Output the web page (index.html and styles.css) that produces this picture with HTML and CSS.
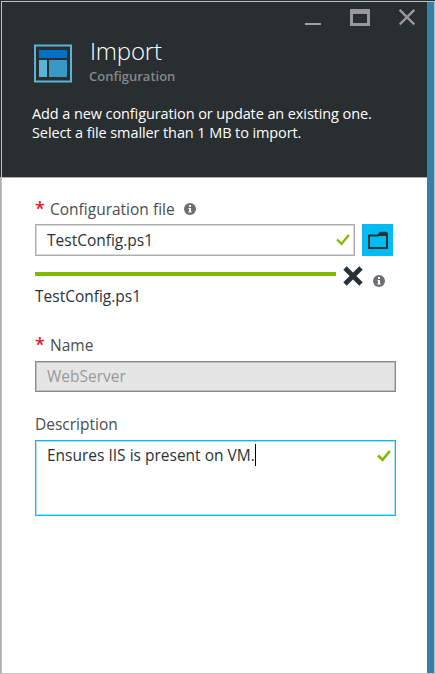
FILE: index.html
```html
<!DOCTYPE html>
<html lang="en">
<head>
<meta charset="utf-8">
<title>Import Configuration</title>
<link rel="stylesheet" href="styles.css">
</head>
<body>
<div class="frame">
  <main class="blade">
    <header class="header">
      <div class="controls">
        <svg width="16" height="18" viewBox="0 0 16 18"><path d="M0 15h16" stroke="#a0a1a2" stroke-width="2"/></svg>
        <svg width="20" height="18" viewBox="0 0 20 18"><path fill="#98999b" fill-rule="evenodd" d="M0 0h20v17H0zM3 5v9h14V5z"/></svg>
        <svg width="16" height="18" viewBox="0 0 16 18"><path d="M.7 .9l14.6 14.6M15.3 .9L.7 15.5" stroke="#98999b" stroke-width="2.4"/></svg>
      </div>
      <div class="heading">
        <svg class="logo" width="38" height="39" viewBox="0 0 38 39"><rect x="1" y="1.5" width="36" height="36" fill="none" stroke="#59b4d9" stroke-width="2"/><path fill="#0072c6" d="M5 6h28v8H5z"/><path fill="#59b4d9" d="M5 16h8v17H5z"/><path fill="#3999c6" d="M15 16h18v17H15z"/></svg>
        <div class="titles">
          <h1>Import</h1>
          <h2>Configuration</h2>
        </div>
      </div>
      <p class="intro">Add a new configuration or update an existing one.<br>Select a file smaller than 1 MB to import.</p>
    </header>
    <form class="form">
      <div class="label"><span class="star">*</span><span>Configuration file</span>
        <svg class="info" width="12" height="12" viewBox="0 0 12 12"><circle cx="6" cy="6" r="6" fill="#6d6e72"/><path fill="#fff" d="M5 2h2v2H5zM4.5 5H7v3.5h.7v1H4.4v-1H5V6h-.5z"/></svg>
      </div>
      <div class="picker">
        <div class="field file"><span>TestConfig.ps1</span>
          <svg class="check" width="14" height="12" viewBox="0 0 14 12"><path d="M1 5.5l4.6 4.4L12.8 1" fill="none" stroke="#7fba00" stroke-width="2.3"/></svg>
        </div>
        <div class="browse"><svg width="22" height="19" viewBox="0 0 22 19"><path d="M2 4.5h9l2.5-2.8H19l1 1V17H2z" fill="none" stroke="#293239" stroke-width="2" stroke-linejoin="round"/><path fill="#293239" d="M10 5l3-4h6l1.500 1.500V5z"/></svg></div>
      </div>
      <div class="progress">
        <div class="bar"></div>
        <svg class="cancel" width="20" height="20" viewBox="0 0 20 20"><path d="M2 2l16 16M18 2L2 18" stroke="#293239" stroke-width="4.8"/></svg>
        <svg class="info2" width="12" height="12" viewBox="0 0 12 12"><circle cx="6" cy="6" r="6" fill="#6d6e72"/><path fill="#fff" d="M5 2h2v2H5zM4.500 5H7v3.500h.7v1H4.400v-1H5V6h-.5z"/></svg>
      </div>
      <div class="uploaded">TestConfig.ps1</div>
      <div class="label name-label"><span class="star">*</span><span>Name</span></div>
      <div class="field disabled"><span>WebServer</span></div>
      <div class="label desc-label"><span>Description</span></div>
      <div class="field area"><span>Ensures IIS is present on VM.</span><i class="caret"></i>
        <svg class="check" width="14" height="12" viewBox="0 0 14 12"><path d="M1 5.5l4.6 4.4L12.8 1" fill="none" stroke="#7fba00" stroke-width="2.6"/></svg>
      </div>
    </form>
  </main>
  <div class="edge"></div>
</div>
</body>
</html>
```
FILE: styles.css
```css
* { box-sizing: border-box; }
body { margin: 0; font: 15.5px/19px "Open Sans", "Noto Sans", sans-serif; color: #293239; background: #292e31; }
svg { display: block; flex: none; }
.frame { display: flex; height: 674px; padding-left: 1px; border-top: 1px solid #292e31; border-bottom: 1px solid #c3c4c5; background: linear-gradient(#292e31 176px, #adadad 176px); }
.blade { flex: 1; border-left: 1px solid #bfc0c2; border-top: 1px solid #bfc3c6; background: #fff; }
.edge { width: 8px; background: #3580a9; border-right: 1px solid #b8bcc0; border-top: 1px solid #bfc3c6; }
.header { height: 176px; padding-top: 7px; background: #292e31; border-bottom: 1px solid #a9acae; color: #fff; }
.controls { display: flex; justify-content: flex-end; gap: 29px; padding-right: 12px; height: 18px; }
.heading { display: flex; padding: 17px 0 0 32px; }
.logo { margin-right: 17px; }
.titles { margin-top: -9px; height: 48px; }
h1, h2 { margin: 0; }
h1 { padding-left: 1px; font-size: 24px; line-height: 32px; font-weight: 300; letter-spacing: -0.2px; }
h2 { padding-top: 1px; font-size: 13px; line-height: 16px; font-weight: 600; color: #85888a; }
.intro { margin: 21px 0 0 30px; font-size: 14.5px; letter-spacing: -0.1px; white-space: nowrap; }
.form { padding: 21px 0 0 33px; }
.label { display: flex; align-items: center; height: 20px; color: #4b4c4f; }
.star { width: 15px; height: 20px; font-size: 18px; line-height: 19px; font-weight: 600; color: #e81123; }
.info { margin-left: 9px; }
.picker { display: flex; gap: 7px; margin-top: 5px; }
.field { display: flex; width: 361px; height: 31px; align-items: center; justify-content: space-between; padding: 0 4px 0 11px; border: 1px solid #adadad; box-shadow: inset 0 0 0 1px #d9d9d9; }
.file { width: 320px; height: 32px; }
.browse { display: grid; place-items: center; width: 31px; height: 32px; background: #00bcf2; }
.progress { display: flex; align-items: flex-start; height: 31px; padding-top: 10px; }
.bar { width: 301px; height: 4px; margin-top: 6px; background: #7fba00; }
.cancel { margin-left: 7px; }
.info2 { margin: 9px 0 0 10px; }
.uploaded { height: 19px; }
.name-label { margin-top: 29px; }
.disabled { margin-top: 6px; background: #e5e5e5; border-color: #898989; box-shadow: inset 0 0 0 1px #bfbfbf; color: #98999b; }
.desc-label { margin-top: 22px; }
.area { height: 76px; margin-top: 6px; padding-top: 3px; align-items: flex-start; justify-content: flex-start; border-color: #00bcf2; box-shadow: inset 0 0 0 1px #a8e6f9; }
.area > span { line-height: 22px; }
.caret { width: 1px; height: 22px; background: #000; }
.area .check { margin: 6px 0 0 auto; }
```
